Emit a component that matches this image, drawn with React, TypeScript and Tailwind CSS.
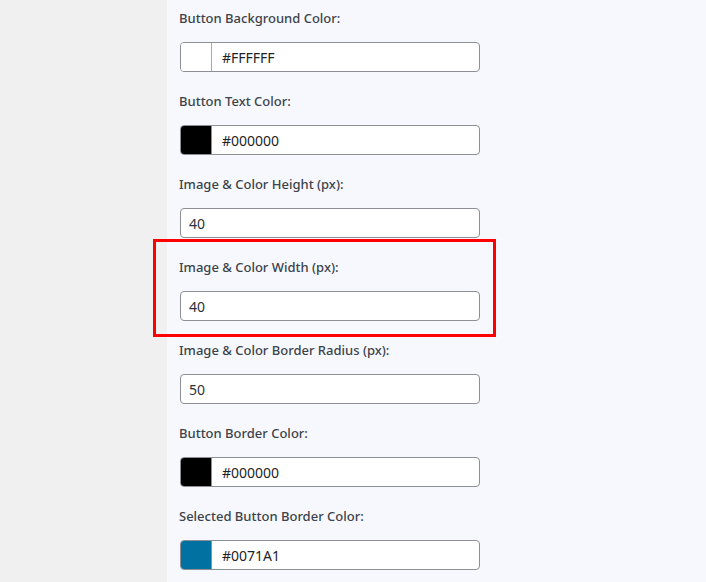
import React from "react";

type Field =
  | { label: string; kind: "color"; value: string; swatch: string }
  | { label: string; kind: "text"; value: string; highlight?: boolean };

const fields: Field[] = [
  { label: "Button Background Color:", kind: "color", value: "#FFFFFF", swatch: "#ffffff" },
  { label: "Button Text Color:", kind: "color", value: "#000000", swatch: "#000000" },
  { label: "Image & Color Height (px):", kind: "text", value: "40" },
  { label: "Image & Color Width (px):", kind: "text", value: "40", highlight: true },
  { label: "Image & Color Border Radius (px):", kind: "text", value: "50" },
  { label: "Button Border Color:", kind: "color", value: "#000000", swatch: "#000000" },
  { label: "Selected Button Border Color:", kind: "color", value: "#0071A1", swatch: "#0071a1" },
];

function FieldRow({ f }: { f: Field }) {
  return (
    <div className="relative h-[83px] pt-[8px]">
      {f.kind === "text" && f.highlight && (
        <div className="pointer-events-none absolute left-[-26px] top-[-10px] h-[98px] w-[343px] border-[3px] border-[#ff0000]" />
      )}
      <div className="h-[20px] text-[13px] leading-[20px] font-medium text-[#3c434a]">{f.label}</div>
      <div className="ml-[1px] mt-[14px] flex h-[30px] w-[300px] overflow-hidden rounded-[4px] border border-[#8c8f94] bg-white">
        {f.kind === "color" && (
          <div
            className={
              f.swatch === "#ffffff"
                ? "h-full w-[31px] border-r border-[#a7aaad] bg-white"
                : f.swatch === "#000000"
                ? "h-full w-[31px] border-r border-[#8c8f94] bg-black"
                : "h-full w-[31px] border-r border-[#8c8f94] bg-[#0071a1]"
            }
          />
        )}
        <div
          className={
            f.kind === "color"
              ? "flex items-center pl-[10px] text-[14px] text-[#1d2327]"
              : "flex items-center pl-[8px] text-[14px] text-[#2c3338]"
          }
        >
          {f.value}
        </div>
      </div>
    </div>
  );
}

export default function App() {
  return (
    <div
      className="flex h-[582px] w-[706px] overflow-hidden"
      style={{ fontFamily: '"Noto Sans", "Open Sans", sans-serif' }}
    >
      <div className="h-full w-[167px] shrink-0 bg-[#f0f0f1]" />
      <div className="h-full flex-1 bg-[#f7f8fe] pl-[12px]">
        {fields.map((f, i) => (
          <FieldRow key={i} f={f} />
        ))}
      </div>
    </div>
  );
}
